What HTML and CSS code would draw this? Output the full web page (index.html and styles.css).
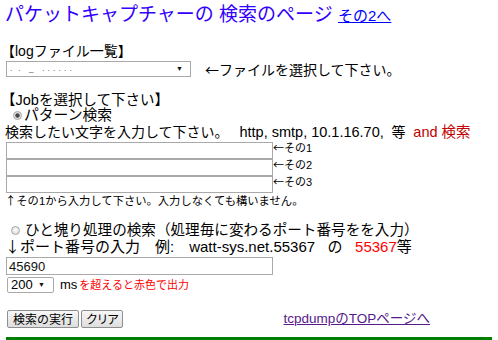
FILE: index.html
```html
<!DOCTYPE html>
<html lang="ja">
<head>
<meta charset="utf-8">
<title>パケットキャプチャーの 検索のページ</title>
<link rel="stylesheet" href="styles.css">
</head>
<body>
<div class="page">
  <h1 class="title">パケットキャプチャーの 検索のページ <a class="sub-link" href="#">その2へ</a></h1>

  <div class="bracket log">【logファイル一覧】</div>
  <div class="file-row">
    <div class="select file-select"><span class="masked">.&nbsp;&nbsp;.&nbsp;&nbsp;&nbsp;_&nbsp;&nbsp;&nbsp;. . . . . .</span><span class="arrow">▼</span></div>
    <span class="file-note"><span class="ar">←</span>ファイルを選択して下さい。</span>
  </div>

  <div class="bracket job">【Jobを選択して下さい】</div>
  <label class="radio-row r1"><input class="radio" type="radio" name="job" checked>パターン検索</label>
  <div class="desc">検索したい文字を入力して下さい。　 <span class="lat">http, smtp, 10.1.16.70,</span>&nbsp; 等&nbsp; <span class="dark-red">and 検索</span></div>
  <div class="inputs">
    <div class="in-row"><input class="text-in" type="text"><span class="tag"><span class="ar">←</span>その1</span></div>
    <div class="in-row"><input class="text-in" type="text"><span class="tag"><span class="ar">←</span>その2</span></div>
    <div class="in-row"><input class="text-in" type="text"><span class="tag"><span class="ar">←</span>その3</span></div>
  </div>
  <div class="hint"><span class="ar">↑</span>その1から入力して下さい。入力しなくても構いません。</div>

  <label class="radio-row r2"><input class="radio" type="radio" name="job">ひと塊り処理の検索（処理毎に変わるポート番号をを入力）</label>
  <div class="desc2"><span class="ar">↓</span>ポート番号の入力　例:　watt-sys.net.55367&nbsp;&nbsp;&nbsp;の&nbsp;&nbsp;&nbsp;<span class="red">55367</span>等</div>
  <input class="port-in" type="text" value="45690">
  <div class="ms-row">
    <div class="select ms-select"><span>200</span><span class="arrow">▼</span></div>
    <span class="ms">ms</span><span class="red ms-note">を超えると赤色で出力</span>
  </div>

  <div class="btn-row">
    <button class="btn" type="button">検索の実行</button>
    <button class="btn clear" type="button">クリア</button>
    <a class="top-link" href="#">tcpdumpのTOPページへ</a>
  </div>
  <div class="rule"></div>
</div>
</body>
</html>
```

FILE: styles.css
```css
* { box-sizing: border-box; }
html, body { margin: 0; padding: 0; background: #fff; }
body {
  font-family: "Liberation Sans", "Noto Sans CJK JP", sans-serif;
  color: #000;
}
.page { width: 498px; padding: 0 6px 0 5px; }
.ar { font-family: "Noto Sans CJK JP", sans-serif; }

.title {
  margin: 0;
  padding-top: 2px;
  font-size: 19px;
  line-height: 26px;
  font-weight: normal;
  color: #3300ff;
  white-space: nowrap;
}
.sub-link { font-size: 15px; color: #0000ff; text-decoration: underline; }

.bracket { margin-left: -4px; white-space: nowrap; }
.log { margin-top: 14px; font-size: 14px; line-height: 16px; }
.job { margin-top: 16px; font-size: 14.5px; line-height: 15px; }

.file-row { display: flex; align-items: center; margin-top: 2px; height: 16px; }
.select {
  display: flex;
  align-items: center;
  justify-content: space-between;
  height: 16px;
  border: 1px solid #a9a9a9;
  background: #fff;
}
.file-select { width: 185px; margin-left: 1px; padding: 0 7px 0 3px; }
.masked { font-size: 8px; line-height: 8px; color: #333; letter-spacing: 0.5px; }
.arrow { font-size: 7px; line-height: 8px; color: #111; }
.file-note { margin-left: 14px; font-size: 14px; line-height: 16px; white-space: nowrap; }

.radio-row { display: flex; align-items: center; white-space: nowrap; }
.r1 { font-size: 14.8px; line-height: 15px; }
.r2 { margin-top: 14px; font-size: 14.6px; line-height: 16px; }
.radio {
  -webkit-appearance: none;
  appearance: none;
  flex: none;
  width: 9px;
  height: 9px;
  margin: 0;
  border: 1px solid #a4a4a4;
  border-radius: 50%;
  background: radial-gradient(circle at 50% 40%, #fdfdfd, #d6d6d6);
}
.radio:checked { background: radial-gradient(circle, #4a4a4a 0 1.8px, #e4e4e4 2.6px); }
.r1 .radio { margin: 0 2px 0 8px; }
.r2 .radio { margin: 0 5px 0 6px; }

.desc { margin-top: 1px; font-size: 14px; line-height: 17px; white-space: nowrap; }
.lat { font-size: 14.5px; }
.dark-red { color: #c00000; font-size: 14.5px; }

.inputs { margin-top: 1px; }
.in-row { display: flex; height: 17px; }
.text-in, .port-in {
  display: block;
  width: 267px;
  height: 17px;
  margin: 0 0 0 1px;
  padding: 0 2px;
  border: 1px solid #a9a9a9;
  background: #fff;
  font-family: "Liberation Sans", sans-serif;
  font-size: 13px;
  color: #111;
  outline: none;
}
.tag { align-self: flex-start; margin: -2px 0 0 0; font-size: 11px; line-height: 14px; white-space: nowrap; }

.hint { font-size: 11.3px; line-height: 14px; white-space: nowrap; }

.desc2 { font-size: 15px; line-height: 15px; white-space: nowrap; }
.red { color: #ff0000; }

.port-in { margin-top: 3px; height: 18px; }

.ms-row { display: flex; align-items: center; margin-top: 2px; height: 16px; white-space: nowrap; }
.ms-select { width: 47px; margin-left: 2px; padding: 0 8px 0 3px; font-size: 13px; line-height: 14px; border-radius: 2px; }
.ms { margin-left: 6px; font-size: 13px; line-height: 16px; }
.ms-note { margin-left: 2px; font-size: 11px; line-height: 16px; }

.btn-row { display: flex; align-items: center; gap: 2px; margin-top: 17px; height: 18px; }
.btn {
  height: 18px;
  margin: 0;
  padding: 0 5px;
  border: 1px solid #8f8f8f;
  border-radius: 2px;
  background: linear-gradient(#f7f7f7, #dedede);
  font-family: "Noto Sans CJK JP", sans-serif;
  font-size: 12px;
  line-height: 14px;
  color: #000;
}
.btn:first-child { margin-left: 2px; }
.clear { padding: 0 4px; letter-spacing: -1.5px; }
.top-link {
  margin-left: 159px;
  font-size: 13.5px;
  line-height: 16px;
  color: #551a8b;
  text-decoration: underline;
  white-space: nowrap;
}

.rule { margin: 9px 0 0 1px; height: 3px; background: #008000; }
```
